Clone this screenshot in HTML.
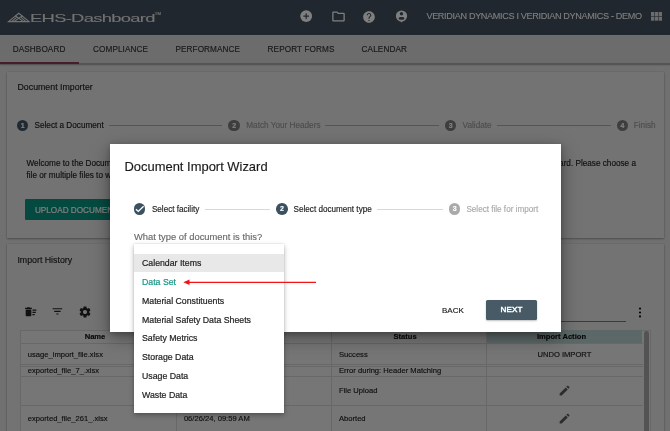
<!DOCTYPE html>
<html><head><meta charset="utf-8">
<style>
*{margin:0;padding:0;box-sizing:border-box}
html,body{width:670px;height:431px;overflow:hidden;font-family:"Liberation Sans",sans-serif;background:#e0e0e0;position:relative}
.a{position:absolute;line-height:1;white-space:nowrap}
#hdr{position:absolute;left:0;top:0;width:670px;height:35px;background:#404e5c}
#tabs{position:absolute;left:0;top:35px;width:670px;height:28px;background:#d8d8d8}
#tabline{position:absolute;left:0;top:62.6px;width:670px;height:2px;background:#aaa;box-shadow:0 0.5px 1px rgba(0,0,0,.15)}
.tab{font-size:8.2px;color:#333;top:46.1px}
.card{position:absolute;left:7.3px;width:657.2px;background:#e6e6e6;box-shadow:0 1px 2px rgba(0,0,0,.3),0 0 1px rgba(0,0,0,.2)}
.ctitle{font-size:8.8px;color:#1e1e1e}
.sc{position:absolute;width:11.6px;height:11.6px;border-radius:50%;color:#fff;font-size:7px;line-height:11.6px;text-align:center;font-weight:bold}
.sl{position:absolute;height:1px;background:#aaa}
.st{font-size:8.2px;color:#222}
.td{font-size:7.6px;color:#222}
#ov{position:absolute;left:0;top:0;width:670px;height:431px;background:rgba(0,0,0,.5)}
#modal{position:absolute;left:110px;top:144px;width:451px;height:188px;background:#fff;box-shadow:0 6px 18px rgba(0,0,0,.35),0 2px 6px rgba(0,0,0,.25)}
.mc{position:absolute;width:11.6px;height:11.6px;border-radius:50%;font-size:7px;line-height:11.6px;text-align:center;color:#fff;font-weight:bold}
#dd{position:absolute;left:134px;top:243.8px;width:149.9px;height:169px;background:#fff;box-shadow:0 2px 5px rgba(0,0,0,.3),0 0 1px rgba(0,0,0,.2)}
.di{font-size:8.75px;color:#1e1e1e;left:142px;-webkit-text-stroke:0.2px currentColor}
#root{position:absolute;left:0;top:0;width:670px;height:431px;will-change:transform;overflow:hidden;-webkit-text-stroke-width:0.15px}
</style></head><body><div id="root">
<!-- header -->
<div id="hdr"></div>
<svg class="a" style="left:0;top:0" width="32" height="30" viewBox="0 0 32 30">
  <g fill="none" stroke="#e8e8e8" stroke-width="1.1" stroke-linejoin="miter">
  <path d="M8.5 21.6 L18.8 13.3 L29.1 21.6 Z"/>
  <path d="M11.6 21.6 L16.6 17.4 M26 21.6 L21 17.4"/>
  <path d="M15.2 15.8 L23.6 21.6 M22.4 15.8 L14 21.6"/>
  </g>
</svg>
<div class="a" style="left:29.6px;top:13.1px;font-size:10.5px;color:#e4e4e4;letter-spacing:-0.4px;-webkit-text-stroke-width:0.05px;transform-origin:0 0;transform:scaleX(1.75)">EHS-Dashboard</div>
<div class="a" style="left:154.8px;top:11.8px;font-size:4.2px;color:#e0e0e0;letter-spacing:0.1px">TM</div>
<svg class="a" style="left:299px;top:9.3px" width="14" height="14" viewBox="0 0 14 14"><circle cx="7.2" cy="7.1" r="5.95" fill="#fff"/><path d="M4.4 7.1 H10 M7.2 4.2 V10" stroke="#404e5c" stroke-width="1.15"/></svg>
<svg class="a" style="left:330.5px;top:9px" width="15" height="15" viewBox="0 0 24 24"><path fill="#fff" d="M9.17 6l2 2H20v10H4V6h5.17M10 4H4c-1.1 0-1.99.9-1.99 2L2 18c0 1.1.9 2 2 2h16c1.1 0 2-.9 2-2V8c0-1.1-.9-2-2-2h-8l-2-2z"/></svg>
<svg class="a" style="left:362.3px;top:9.6px" width="14" height="14" viewBox="0 0 24 24"><path fill="#fff" d="M12 2C6.48 2 2 6.48 2 12s4.48 10 10 10 10-4.48 10-10S17.52 2 12 2zm1 17h-2v-2h2v2zm2.07-7.75l-.9.92C13.45 12.9 13 13.5 13 15h-2v-.5c0-1.1.45-2.1 1.17-2.83l1.24-1.26c.37-.36.59-.86.59-1.41 0-1.1-.9-2-2-2s-2 .9-2 2H8c0-2.21 1.79-4 4-4s4 1.79 4 4c0 .88-.36 1.68-.93 2.25z"/></svg>
<svg class="a" style="left:395px;top:10px" width="13" height="13" viewBox="0 0 13 13">
  <circle cx="6.5" cy="6" r="5.6" fill="#fff"/><path d="M4.8 10.5 L6.5 12.5 L8.2 10.5Z" fill="#fff"/>
  <circle cx="6.5" cy="3.7" r="1.7" fill="#404e5c"/><ellipse cx="6.5" cy="8.4" rx="3" ry="1.3" fill="#404e5c"/>
</svg>
<div class="a" style="left:426.4px;top:12.2px;font-size:9.1px;color:#fff;letter-spacing:-0.33px;-webkit-text-stroke-width:0.05px">VERIDIAN DYNAMICS I VERIDIAN DYNAMICS - DEMO</div>
<svg class="a" style="left:651.3px;top:12.3px" width="11" height="9" viewBox="0 0 11 9"><g fill="#d8d8d8">
<rect x="0" y="0" width="3.3" height="4"/><rect x="3.85" y="0" width="3.3" height="4"/><rect x="7.7" y="0" width="3.3" height="4"/>
<rect x="0" y="4.6" width="3.3" height="4.1"/><rect x="3.85" y="4.6" width="3.3" height="4.1"/><rect x="7.7" y="4.6" width="3.3" height="4.1"/></g></svg>

<!-- tabs -->
<div id="tabs"></div>
<div id="tabline"></div>
<div class="a" style="left:0;top:62px;width:79px;height:2px;background:#8c3a50"></div>
<div class="a tab" style="left:12.7px;letter-spacing:0.1px">DASHBOARD</div>
<div class="a tab" style="left:93px;letter-spacing:0.1px">COMPLIANCE</div>
<div class="a tab" style="left:175.4px;letter-spacing:0.1px">PERFORMANCE</div>
<div class="a tab" style="left:267.6px;letter-spacing:0.1px">REPORT FORMS</div>
<div class="a tab" style="left:361.6px;letter-spacing:0.1px">CALENDAR</div>

<!-- card 1 -->
<div class="card" style="top:72.1px;height:165.9px"></div>
<div class="a ctitle" style="left:17.5px;top:83.4px">Document Importer</div>
<div class="sc" style="left:16.9px;top:119.9px;background:#3f5566">1</div>
<div class="a st" style="left:34.5px;top:122.2px">Select a Document</div>
<div class="sl" style="left:108.6px;top:125px;width:113.6px"></div>
<div class="sc" style="left:228.4px;top:119.9px;background:#7c7c7c">2</div>
<div class="a st" style="left:246.3px;top:122.2px;color:#999">Match Your Headers</div>
<div class="sl" style="left:325.2px;top:125px;width:113.6px"></div>
<div class="sc" style="left:444.9px;top:119.9px;background:#7c7c7c">3</div>
<div class="a st" style="left:462.6px;top:122.2px;color:#999">Validate</div>
<div class="sl" style="left:497px;top:125px;width:113.5px"></div>
<div class="sc" style="left:616.7px;top:119.9px;background:#7c7c7c">4</div>
<div class="a st" style="left:633.8px;top:122.2px;color:#999">Finish</div>
<div class="a st" style="left:26.5px;top:159.5px">Welcome to the Document</div>
<div class="a st" style="left:26.5px;top:171.6px">file or multiple files to work</div>
<div class="a st" style="right:34px;top:159.5px">ard. Please choose a</div>
<div class="a" style="left:25.2px;top:199.2px;width:120px;height:20.9px;background:#0a9480;border-radius:1px"></div>
<div class="a" style="left:34.9px;top:206.7px;font-size:8.2px;color:#fff;letter-spacing:0px">UPLOAD DOCUMENT</div>

<!-- card 2 -->
<div class="card" style="top:243.5px;height:200px"></div>
<div class="a ctitle" style="left:17.4px;top:255.6px">Import History</div>
<svg class="a" style="left:23.7px;top:305px" width="13.5" height="13.5" viewBox="0 0 24 24"><path fill="#222" d="M15 16h4v2h-4zm0-8h7v2h-7zm0 4h6v2h-6zM3 18c0 1.1.9 2 2 2h6c1.1 0 2-.9 2-2V8H3v10zM14 5h-3l-1-1H6L5 5H2v2h12z"/></svg>
<svg class="a" style="left:51.3px;top:305.4px" width="12.8" height="12.8" viewBox="0 0 24 24"><path fill="#222" d="M10 18h4v-2h-4v2zM3 6v2h18V6H3zm3 7h12v-2H6v2z"/></svg>
<svg class="a" style="left:78.4px;top:305px" width="14" height="14" viewBox="0 0 24 24"><path fill="#222" d="M19.14 12.94c.04-.3.06-.61.06-.94 0-.32-.02-.64-.07-.94l2.03-1.58c.18-.14.23-.41.12-.61l-1.92-3.32c-.12-.22-.37-.29-.59-.22l-2.39.96c-.5-.38-1.03-.7-1.62-.94l-.36-2.54c-.04-.24-.24-.41-.48-.41h-3.84c-.24 0-.43.17-.47.41l-.36 2.54c-.59.24-1.13.57-1.62.94l-2.39-.96c-.22-.08-.47 0-.59.22L2.74 8.87c-.12.21-.08.47.12.61l2.03 1.58c-.05.3-.09.63-.09.94s.02.64.07.94l-2.03 1.58c-.18.14-.23.41-.12.61l1.92 3.32c.12.22.37.29.59.22l2.39-.96c.5.38 1.03.7 1.62.94l.36 2.54c.05.24.24.41.48.41h3.84c.24 0 .44-.17.47-.41l.36-2.54c.59-.24 1.13-.56 1.62-.94l2.39.96c.22.08.47 0 .59-.22l1.92-3.32c.12-.22.07-.47-.12-.61l-2.01-1.58zM12 15.6c-1.98 0-3.6-1.62-3.6-3.6s1.62-3.6 3.6-3.6 3.6 1.62 3.6 3.6-1.62 3.6-3.6 3.6z"/></svg>
<div class="a" style="left:480px;top:321.2px;width:146.3px;height:1px;background:#777"></div>
<svg class="a" style="left:638.2px;top:307px" width="4" height="11" viewBox="0 0 4 11"><g fill="#111"><circle cx="2" cy="1.6" r="1.1"/><circle cx="2" cy="5.5" r="1.1"/><circle cx="2" cy="9.4" r="1.1"/></g></svg>

<!-- table -->
<div class="a" style="left:20.2px;top:329.8px;width:630.8px;height:110px;border:1px solid #d0d0d0;background:#ececec"></div>
<div class="a" style="left:487px;top:329.8px;width:155px;height:14.6px;background:#b8d0ce"></div>
<div class="a" style="left:20.6px;top:343.1px;width:622px;height:1px;background:#d0d0d0"></div>
<div class="a" style="left:20.6px;top:364.4px;width:622px;height:1px;background:#d0d0d0"></div>
<div class="a" style="left:20.6px;top:365.7px;width:622px;height:1px;background:#d0d0d0"></div>
<div class="a" style="left:20.6px;top:376px;width:622px;height:1px;background:#d0d0d0"></div>
<div class="a" style="left:20.6px;top:404.9px;width:622px;height:1px;background:#d0d0d0"></div>
<div class="a" style="left:176.2px;top:329.8px;width:1px;height:110px;background:#d0d0d0"></div>
<div class="a" style="left:331.3px;top:329.8px;width:1px;height:110px;background:#d0d0d0"></div>
<div class="a" style="left:486.3px;top:329.8px;width:1px;height:110px;background:#d0d0d0"></div>
<div class="a" style="left:644.4px;top:331.4px;width:4.8px;height:110px;background:#a6a6a6;border-radius:2.4px"></div>
<div class="a td" style="left:75px;top:333px;font-weight:bold;color:#111;width:40px;text-align:center">Name</div>
<div class="a td" style="left:385px;top:333px;font-weight:bold;color:#111;width:40px;text-align:center">Status</div>
<div class="a td" style="left:531.5px;top:333px;font-weight:bold;color:#111;width:60px;text-align:center">Import Action</div>
<div class="a td" style="left:27.8px;top:350.5px">usage_import_file.xlsx</div>
<div class="a td" style="left:27.8px;top:367px">exported_file_7_.xlsx</div>
<div class="a td" style="left:27.8px;top:414.9px">exported_file_261_.xlsx</div>
<div class="a td" style="left:183.9px;top:414.9px">06/26/24, 09:59 AM</div>
<div class="a td" style="left:339px;top:350.5px">Success</div>
<div class="a td" style="left:339px;top:367px">Error during: Header Matching</div>
<div class="a td" style="left:339px;top:386.6px">File Upload</div>
<div class="a td" style="left:339px;top:414.9px">Aborted</div>
<div class="a td" style="left:530px;top:350.5px;width:68.8px;text-align:center">UNDO IMPORT</div>
<svg class="a" style="left:557.9px;top:384.4px" width="13.2" height="13.2" viewBox="0 0 24 24"><path fill="#5a5a5a" d="M3 17.25V21h3.75L17.81 9.94l-3.75-3.75L3 17.25zM20.71 7.04c.39-.39.39-1.02 0-1.41l-2.34-2.34c-.39-.39-1.02-.39-1.41 0l-1.83 1.83 3.75 3.75 1.83-1.83z"/></svg>
<svg class="a" style="left:557.9px;top:412.3px" width="13.2" height="13.2" viewBox="0 0 24 24"><path fill="#5a5a5a" d="M3 17.25V21h3.75L17.81 9.94l-3.75-3.75L3 17.25zM20.71 7.04c.39-.39.39-1.02 0-1.41l-2.34-2.34c-.39-.39-1.02-.39-1.41 0l-1.83 1.83 3.75 3.75 1.83-1.83z"/></svg>

<!-- overlay -->
<div id="ov"></div>

<!-- modal -->
<div id="modal"></div>
<div class="a" style="left:124.5px;top:161.2px;font-size:12.95px;color:#1a1a1a">Document Import Wizard</div>
<div class="mc" style="left:133.6px;top:203px;background:#3b5161"></div>
<svg class="a" style="left:133px;top:202px" width="14" height="14" viewBox="0 0 14 14"><path d="M2.9 7.2 L5.3 9.4 L10.6 4.3" fill="none" stroke="#fff" stroke-width="1.35"/></svg>
<div class="a" style="left:151.9px;top:205.7px;font-size:8.15px;color:#222">Select facility</div>
<div class="a" style="left:204.5px;top:208.5px;width:65.5px;height:1px;background:#d8d8d8"></div>
<div class="mc" style="left:276.2px;top:203px;background:#3b5161">2</div>
<div class="a" style="left:293.6px;top:205.7px;font-size:8.15px;color:#222">Select document type</div>
<div class="a" style="left:377px;top:208.5px;width:65.5px;height:1px;background:#d8d8d8"></div>
<div class="mc" style="left:448.8px;top:203.1px;background:#aaa">3</div>
<div class="a" style="left:466.4px;top:205.7px;font-size:8.15px;color:#aaa">Select file for import</div>
<div class="a" style="left:134px;top:231.6px;font-size:9.4px;color:#6a6a6a">What type of document is this?</div>
<div class="a" style="left:442px;top:307px;font-size:8px;color:#1a1a1a">BACK</div>
<div class="a" style="left:485.7px;top:299.6px;width:51.3px;height:20.7px;background:#475a65;border-radius:1.5px;box-shadow:0 1px 2px rgba(0,0,0,.25)"></div>
<div class="a" style="left:500.6px;top:305.8px;font-size:8.1px;color:#fff;letter-spacing:0.05px;-webkit-text-stroke-width:0.45px">NEXT</div>

<!-- dropdown -->
<div id="dd"></div>
<div class="a" style="left:134px;top:253.6px;width:149.9px;height:18.3px;background:#e8e8e8"></div>
<div class="a di" style="top:259.1px">Calendar Items</div>
<div class="a di" style="top:277.9px;color:#159685">Data Set</div>
<div class="a di" style="top:296.7px">Material Constituents</div>
<div class="a di" style="top:315.5px">Material Safety Data Sheets</div>
<div class="a di" style="top:334.3px">Safety Metrics</div>
<div class="a di" style="top:353.1px">Storage Data</div>
<div class="a di" style="top:371.9px">Usage Data</div>
<div class="a di" style="top:390.7px">Waste Data</div>

<!-- arrow -->
<svg class="a" style="left:180px;top:277px" width="140" height="11" viewBox="0 0 140 11">
  <path d="M8 5.3 H136" stroke="#f01414" stroke-width="1.2"/>
  <path d="M3.3 5.3 L9.5 2.5 L9.5 8.1 Z" fill="#f01414"/>
</svg>
</div></body></html>
